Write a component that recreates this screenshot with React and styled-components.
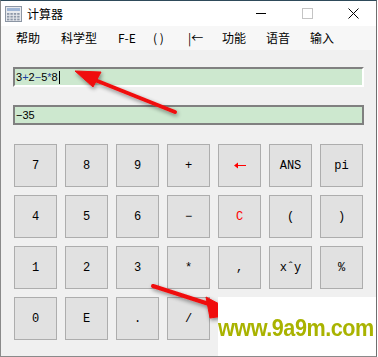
import React from 'react';
import styled, { createGlobalStyle } from 'styled-components';

const Global = createGlobalStyle`
  html, body { margin: 0; padding: 0; background: #ffffff; }
  * { box-sizing: border-box; }
`;

const Window = styled.div`
  position: relative;
  width: 377px;
  height: 357px;
  background: #f0f0f0;
  border-left: 1px solid #8a8a8a;
  border-right: 1px solid #6f6f6f;
  border-bottom: 1px solid #8a8a8a;
  border-top: 1px solid #2e4a5a;
  overflow: hidden;
  display: flex;
  flex-direction: column;
`;

const TitleBar = styled.div`
  height: 25px;
  background: #ffffff;
  display: flex;
  align-items: center;
  padding-left: 4px;
  font-family: "Noto Sans CJK SC", "Noto Sans", sans-serif;
  font-size: 12px;
  color: #000;
`;

const Title = styled.span`
  margin-left: 5px;
  flex: 1;
  line-height: 1;
`;

const Ctrl = styled.div`
  width: 46px;
  height: 25px;
  display: flex;
  align-items: center;
  justify-content: center;
`;

const MenuBar = styled.div`
  height: 24px;
  background: #f7f7f7;
  display: flex;
  align-items: center;
  padding-left: 15px;
  font-family: "Noto Sans CJK SC", "Noto Sans", sans-serif;
  font-size: 12px;
  color: #000;
`;

const MenuItem = styled.span`
  width: ${p => p.w}px;
  line-height: 1;
  white-space: nowrap;
`;

const Body = styled.div`
  flex: 1;
  padding: 17px 0 0 12px;
  display: flex;
  flex-direction: column;
`;

const Field = styled.div`
  width: 351px;
  height: 20px;
  background: #cde8cf;
  border: 2px solid #808080;
  border-right-color: ${p => (p.sunken ? '#ffffff' : '#808080')};
  border-bottom-color: ${p => (p.sunken ? '#ffffff' : '#808080')};
  margin-bottom: ${p => p.mb}px;
  display: flex;
  align-items: center;
  padding-left: 1px;
  font-family: "Liberation Sans", Arial, sans-serif;
  font-size: 11px;
  color: #000;
`;

const Op = styled.span`
  color: #1b3fa0;
`;

const Caret = styled.span`
  display: inline-block;
  width: 1px;
  height: 13px;
  background: #000;
  margin-left: 1px;
`;

const Pad = styled.div`
  margin-top: 19px;
  margin-left: 1px;
  display: grid;
  grid-template-columns: repeat(7, 43px);
  grid-auto-rows: 43px;
  gap: 8px;
`;

const Key = styled.div`
  background: #e1e1e1;
  border: 1px solid #adadad;
  display: flex;
  align-items: center;
  justify-content: center;
  font-family: "Liberation Mono", "DejaVu Sans Mono", monospace;
  font-size: 12px;
  color: ${p => (p.red ? '#ff0000' : '#000')};
`;

const Overlay = styled.svg`
  position: absolute;
  left: -1px;
  top: -1px;
  pointer-events: none;
`;

const Watermark = styled.div`
  position: absolute;
  left: 217px;
  top: 296px;
  right: -2px;
  bottom: -2px;
  background: #ffffff;
  display: flex;
  align-items: center;
  padding-top: 1px;
  white-space: nowrap;
`;

const MarkText = styled.span`
  display: inline-block;
  transform: scaleX(0.9);
  transform-origin: left center;
  font-family: "Liberation Sans", Arial, sans-serif;
  font-weight: 700;
  font-size: 24px;
  letter-spacing: -0.5px;
  color: #a9b300;
`;

const CalcIcon = () => (
  <svg width="17" height="16" viewBox="0 0 17 16">
    <rect x="0.5" y="0.5" width="16" height="15" fill="#e8eaee" stroke="#8c96a4" />
    <rect x="2" y="2" width="13" height="3" fill="#9fb6d6" />
    {[0, 1, 2, 3].map(c =>
      [0, 1, 2].map(r => (
        <rect key={c + '-' + r} x={2 + c * 3.4} y={7 + r * 2.8} width="2.4" height="1.8" fill="#8e98a8" />
      ))
    )}
  </svg>
);

const BackArrow = () => (
  <svg width="12" height="7" viewBox="0 0 12 7">
    <line x1="3" y1="3.5" x2="12" y2="3.5" stroke="#ff0000" strokeWidth="1" />
    <polygon points="0,3.5 4,0.5 4,6.5" fill="#ff0000" />
  </svg>
);

const keys = [
  '7', '8', '9', '+', 'back', 'ANS', 'pi',
  '4', '5', '6', '−', 'C', '(', ')',
  '1', '2', '3', '*', ',', 'xˆy', '%',
  '0', 'E', '.', '/',
];

const menu = [
  ['帮助', 45], ['科学型', 57], ['F-E', 35], ['( )', 35], ['|←', 34], ['功能', 44], ['语音', 44], ['输入', 40],
];

export default function App() {
  return (
    <>
      <Global />
      <Window>
        <TitleBar>
          <CalcIcon />
          <Title>计算器</Title>
          <Ctrl>
            <svg width="11" height="11"><line x1="0" y1="5.5" x2="10" y2="5.5" stroke="#000" /></svg>
          </Ctrl>
          <Ctrl>
            <svg width="11" height="11"><rect x="0.5" y="0.5" width="10" height="10" fill="none" stroke="#c4c4c4" /></svg>
          </Ctrl>
          <Ctrl>
            <svg width="11" height="11"><path d="M0.5 0.5 L10.5 10.5 M10.5 0.5 L0.5 10.5" stroke="#000" /></svg>
          </Ctrl>
        </TitleBar>
        <MenuBar>
          {menu.map(([t, w]) => <MenuItem key={t} w={w}>{t}</MenuItem>)}
        </MenuBar>
        <Body>
          <Field sunken mb={18}>
            3<Op>+</Op>2<Op>−</Op>5<Op>*</Op>8<Caret />
          </Field>
          <Field mb={0}>−35</Field>
          <Pad>
            {keys.map((k, i) => (
              <Key key={i} red={k === 'C'}>{k === 'back' ? <BackArrow /> : k}</Key>
            ))}
          </Pad>
        </Body>
        <Overlay width="378" height="357" viewBox="0 0 378 357">
          <defs>
            <filter id="sh" x="-20%" y="-50%" width="140%" height="200%">
              <feGaussianBlur in="SourceAlpha" stdDeviation="2" />
              <feOffset dx="1" dy="2" result="b" />
              <feComponentTransfer><feFuncA type="linear" slope="0.45" /></feComponentTransfer>
              <feMerge><feMergeNode /><feMergeNode in="SourceGraphic" /></feMerge>
            </filter>
          </defs>
          <g filter="url(#sh)" fill="#f01010" stroke="#f01010">
            <line x1="175" y1="112" x2="95" y2="80" strokeWidth="4" strokeLinecap="round" />
            <polygon points="75,71 101,72 93,87" strokeWidth="1" />
          </g>
          <g filter="url(#sh)" fill="#f01010" stroke="#f01010">
            <line x1="153" y1="286" x2="215" y2="306" strokeWidth="4" strokeLinecap="round" />
            <polygon points="238,314 206,297 210,318" strokeWidth="1" />
          </g>
        </Overlay>
        <Watermark><MarkText>www.9a9m.com</MarkText></Watermark>
      </Window>
    </>
  );
}
